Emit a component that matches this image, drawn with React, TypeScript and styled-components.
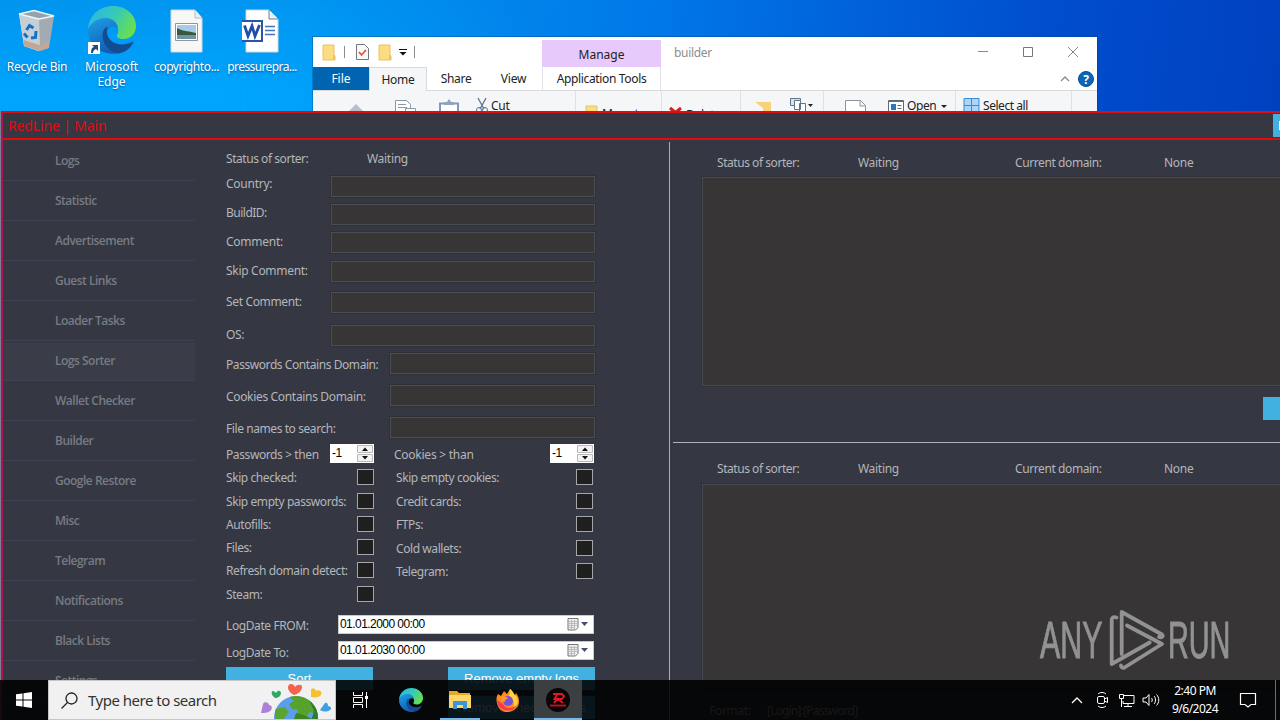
import React from 'react';
import styled, { createGlobalStyle } from 'styled-components';

const GlobalStyle = createGlobalStyle`
  * { box-sizing: border-box; }
  body {
    margin: 0;
    overflow: hidden;
    font-family: 'Noto Sans', sans-serif;
    font-size: 12px;
  }
  svg { display: block; flex: none; }
`;

const Desktop = styled.div`
  position: relative;
  width: 1280px;
  height: 720px;
  overflow: hidden;
  background: linear-gradient(97deg, #0095ee 0%, #0097f2 22%, #0078e8 48%, #0050cf 75%, #003cbc 100%);
`;

const Glow = styled.div`
  position: absolute;
  inset: 0 auto auto 0;
  width: 560px;
  height: 112px;
  background: linear-gradient(180deg, rgba(0, 168, 255, 0) 0%, rgba(0, 168, 255, .8) 80%);
  mask-image: linear-gradient(90deg, #000 40%, transparent);
`;

const Shortcuts = styled.div`
  position: relative;
  display: flex;
  padding: 6px 0 0;
`;

const Shortcut = styled.div<{ $w: number }>`
  width: ${p => p.$w}px;
  display: flex;
  flex-direction: column;
  align-items: center;
  row-gap: 5px;
  text-align: center;
  line-height: 15px;
  color: #fff;
  text-shadow: 0 1px 2px rgba(0, 30, 80, .6);
`;

const ShortcutArrow = styled.svg`
  position: absolute;
  left: 88px;
  top: 42px;
`;

const Text = styled.span<{ $ls?: number }>`
  display: inline-block;
  white-space: nowrap;
  letter-spacing: ${p => p.$ls ?? 0}px;
`;

/* ---------- explorer ---------- */

const Explorer = styled.div`
  position: absolute;
  left: 313px;
  top: 37px;
  width: 784px;
  height: 90px;
  background: #fff;
  color: #222;
  box-shadow: 0 0 0 1px rgba(0, 60, 130, .35);
`;

const ExplorerTop = styled.div`
  display: flex;
  height: 30px;
  align-items: center;
`;

const QuickBar = styled.div`
  width: 229px;
  display: flex;
  align-items: center;
  padding-left: 9px;
`;

const Tick = styled.i<{ $l: number; $r: number }>`
  width: 1px;
  height: 12px;
  margin: 0 ${p => p.$r}px 0 ${p => p.$l}px;
  background: #8c8c8c;
`;

const Gap = styled.i<{ $w: number }>`
  width: ${p => p.$w}px;
`;

const Manage = styled.div`
  width: 119px;
  height: 27px;
  align-self: flex-end;
  padding-top: 6px;
  background: #e8c9fb;
  text-align: center;
`;

const WindowTitle = styled.div`
  width: 304px;
  padding-left: 13px;
  color: #8d8d8d;
`;

const WindowButtons = styled.div`
  display: flex;
  column-gap: 33px;
  padding-left: 12px;
`;

const Tabs = styled.div`
  display: flex;
  height: 24px;
  line-height: 24px;
  border-bottom: 1px solid #d9dadb;
`;

const Tab = styled.div<{ $w: number; $kind?: 'file' | 'active' | 'tools' }>`
  width: ${p => p.$w}px;
  text-align: center;
  ${p => p.$kind === 'file' && 'background: #0064b0; color: #fff;'}
  ${p => p.$kind === 'active' && 'background: #f5f6f7; border: 1px solid #dadbdc; border-bottom: 0; height: 24px; line-height: 23px;'}
  ${p => p.$kind === 'tools' && 'border: solid #e4e0ea; border-width: 0 1px;'}
`;

const TabsRight = styled.div`
  display: flex;
  align-items: center;
  margin-left: auto;
  column-gap: 8px;
  padding-right: 3px;
`;

const Ribbon = styled.div`
  display: flex;
  height: 36px;
  background: #f5f6f7;
`;

const RibbonGroup = styled.div<{ $w: number }>`
  width: ${p => p.$w}px;
  flex: none;
  display: flex;
  align-items: flex-start;
  border-right: 1px solid #e0e1e2;
`;

const RibbonItem = styled.div<{ $l: number; $t?: number }>`
  display: flex;
  column-gap: 3px;
  margin-left: ${p => p.$l}px;
  padding-top: ${p => p.$t ?? 6}px;
  line-height: 18px;
`;

/* ---------- main window ---------- */

const Main = styled.div`
  position: absolute;
  left: 1px;
  top: 111px;
  width: 1400px;
  height: 640px;
  border: 2px solid #dc0f14;
  border-left-color: #a81848;
  background: #353842;
  color: #b4b6ba;
  box-shadow: -1px 0 0 #7b7f9c;
`;

const TitleBar = styled.div`
  display: flex;
  justify-content: space-between;
  height: 27px;
  border-bottom: 2px solid #e40c0a;
  color: #dc0d16;
  font-size: 14px;
  line-height: 26px;
  padding-left: 5px;
`;

const TitleButton = styled.div`
  width: 126px;
  height: 23px;
  margin-top: 1px;
  padding: 7px 0 0 6px;
  background: #41b1e1;
`;

const Body = styled.div`
  display: flex;
  height: 610px;
`;

const Nav = styled.div`
  width: 193px;
  padding: 1px 1px 0 1px;
`;

const NavItem = styled.div<{ $active?: boolean }>`
  height: 40px;
  padding-left: 51px;
  line-height: 39px;
  font-family: 'Open Sans', sans-serif;
  font-weight: 600;
  letter-spacing: -.5px;
  color: #777b84;
  border-bottom: 1px solid #3d4350;
  background: ${p => (p.$active ? 'linear-gradient(#353842 2px, #3a3d47 2px)' : 'none')};
`;

const Form = styled.div`
  width: 399px;
  padding: 6px 0 0 30px;
`;

const Row = styled.div<{ $gap?: number; $h?: number }>`
  display: flex;
  align-items: center;
  width: 369px;
  height: ${p => p.$h ?? 22}px;
  margin-top: ${p => p.$gap ?? 0}px;
`;

const Label = styled.div<{ $w: number; $up?: number; $in?: number; $ls?: number }>`
  width: ${p => p.$w}px;
  flex: none;
  line-height: 17px;
  padding: 1px 0 0 ${p => p.$in ?? 0}px;
  margin-bottom: ${p => (p.$up ?? 0) * 2}px;
  letter-spacing: ${p => p.$ls ?? -0.4}px;
  white-space: nowrap;
`;

const Field = styled.div`
  flex: 1;
  align-self: flex-start;
  height: 21px;
  background: #373536;
  border: 1px solid #4b4d51;
  outline: 1px solid #2e3138;
`;

const Spinner = styled.div`
  display: flex;
  width: 44px;
  height: 19px;
  padding: 1px 1px 1px 2px;
  background: #fff;
  color: #000;
  font: 12px/17px 'Liberation Sans', sans-serif;
  letter-spacing: -.5px;
  justify-content: space-between;
`;

const Checks = styled.div`
  display: flex;
  height: 146px;
`;

const CheckColumn = styled.div<{ $w: number; $l?: number }>`
  width: ${p => p.$w}px;
  margin-left: ${p => p.$l ?? 0}px;
  padding-top: 6px;
`;

const CheckRow = styled.div<{ $h: number }>`
  display: flex;
  justify-content: space-between;
  height: ${p => p.$h}px;
  line-height: 17px;
  letter-spacing: -.42px;
  white-space: nowrap;
`;

const CheckBox = styled.i`
  width: 17px;
  height: 16px;
  background: #1f1f20;
  border: 1px solid #a4a6a8;
`;

const DateBox = styled.div`
  display: flex;
  align-items: center;
  justify-content: space-between;
  width: 256px;
  height: 19px;
  padding: 0 4px 0 1px;
  background: #fff;
  border: 1px solid #c8cacc;
  color: #000;
  font: 12px/17px 'Liberation Sans', sans-serif;
`;

const Buttons = styled.div<{ $top: number }>`
  display: flex;
  justify-content: space-between;
  width: 369px;
  margin-top: ${p => p.$top}px;
`;

const Button = styled.div`
  width: 147px;
  height: 23px;
  background: #41b1e1;
  color: #fff;
  font: 13px/23px 'Liberation Sans', sans-serif;
  text-align: center;
`;

const Sorters = styled.div`
  flex: 1;
  margin: 2px 0 0 74px;
  border-left: 1px solid #a9acb2;
`;

const Sorter = styled.div<{ $h: number; $top: number }>`
  height: ${p => p.$h}px;
  margin-left: 3px;
  padding: ${p => p.$top}px 0 0 29px;
  border-bottom: 1px solid #b1b3b8;
`;

const StatusLine = styled.div`
  display: flex;
  height: 16px;
  padding-left: 15px;
  line-height: 17px;
`;

const Cell = styled.div<{ $w: number; $ls?: number }>`
  width: ${p => p.$w}px;
  letter-spacing: ${p => p.$ls ?? -0.3}px;
  white-space: nowrap;
`;

const Output = styled.div<{ $top: number }>`
  height: 209px;
  margin-top: ${p => p.$top}px;
  background: #373536;
  border: 1px solid #484a4d;
  outline: 1px solid #2f3138;
`;

const SideButton = styled.div`
  width: 100px;
  height: 23px;
  margin: 11px 0 0 561px;
  background: #41b1e1;
`;

const Format = styled.div`
  display: flex;
  padding: 9px 0 0 7px;
`;

/* ---------- watermark and taskbar ---------- */

const Watermark = styled.div`
  position: absolute;
  left: 1040px;
  top: 608px;
  display: flex;
  align-items: center;
  height: 66px;
  color: #929293;
`;

const Word = styled.div<{ $w: number; $scale: number }>`
  width: ${p => p.$w}px;
  font: 51px/66px 'Liberation Sans', sans-serif;
  -webkit-text-stroke: 1px #929293;
  white-space: nowrap;
  transform: scaleX(${p => p.$scale});
  transform-origin: 0 50%;
`;

const Taskbar = styled.div`
  position: absolute;
  left: 0;
  top: 680px;
  display: flex;
  align-items: center;
  width: 1280px;
  height: 40px;
  background: rgba(0, 0, 0, .88);
  color: #fff;
`;

const Start = styled.div`
  width: 48px;
  padding-left: 16px;
`;

const Search = styled.div`
  display: flex;
  align-items: center;
  width: 288px;
  height: 40px;
  padding-left: 12px;
  background: #f1f1f1;
  border: 1px solid #c6c6c6;
  color: #333;
  font-size: 15px;
`;

const SearchText = styled.div`
  width: 182px;
  padding-left: 10px;
  white-space: nowrap;
`;

const Task = styled.div<{ $w: number; $open?: boolean; $active?: boolean }>`
  display: flex;
  align-items: center;
  justify-content: center;
  width: ${p => p.$w}px;
  height: 40px;
  background: ${p => (p.$active ? '#3b3f42' : 'none')};
  border-bottom: ${p => (p.$open ? '2px solid #76b9ed' : '0')};
  padding-top: ${p => (p.$open ? 2 : 0)}px;
`;

const Tray = styled.div`
  display: flex;
  align-items: center;
  height: 40px;
  margin-left: auto;
  border-right: 1px solid #6e6e6e;
  margin-right: 4px;
  padding-right: 18px;
`;

const Clock = styled.div`
  width: 70px;
  margin-right: 9px;
  text-align: center;
  line-height: 18px;
  letter-spacing: -.5px;
`;

const EdgeLogo: React.FC<{ size: number; id: string }> = ({ size, id }) => (
  <svg width={size} height={size} viewBox='0 0 48 48'>
    <defs>
      <linearGradient id={`${id}a`} x1='0' y1='.2' x2='1' y2='.6'>
        <stop offset='0' stopColor='#2bb7e6' />
        <stop offset='.5' stopColor='#36c9b8' />
        <stop offset='1' stopColor='#6be04c' />
      </linearGradient>
      <linearGradient id={`${id}b`} x1='0' y1='0' x2='.4' y2='1'>
        <stop offset='0' stopColor='#1e9fe6' />
        <stop offset='1' stopColor='#0f5fb5' />
      </linearGradient>
    </defs>
    <path d='M0 23C1 9 12 0 25 0c13 0 23 9 23 20 0 8-6 13-12 13-6 0-8-2-7-4 3-4 1-12-8-13C11 14 3 18 0 23z' fill={`url(#${id}a)`} />
    <path d='M0 24c2-7 9-12 18-12 7 0 12 5 12 11-4-5-11-2-11 5 0 9 6 17 14 19C15 51 0 40 0 24z' fill={`url(#${id}b)`} />
    <path d='M17 22c-6 8 0 22 11 25 8 1 14-4 17-10 1-1 0-2-1-1-12 6-25 0-25-10 0-2 0-3 1-5z' fill='#134c93' />
  </svg>
);

const RecycleBin = () => (
  <svg width='42' height='48' viewBox='0 0 42 48'>
    <path d='M3 8l5 32 14 5 9-3 5-31-16-6z' fill='#cfd7dc' />
    <path d='M3 8l20 5 1 32-16-5z' fill='#c6cfd5' />
    <path d='M23 13l15-3-5 32-9 3z' fill='#a2abb1' />
    <path d='M7.500 34l16 5 10-4-1 7-9 3-15-5z' fill='#c2a797' />
    <path d='M3 8l15-3.500L38 10l-15 3z' fill='#93a3ab' stroke='#edf5f8' strokeWidth='1.300' />
    <g fill='none' stroke='#1670c4' strokeWidth='3'>
      <path d='M10.500 24l3-4.500 4 2.500M20 25l-.5 6.500-4.500.5M11.500 31.500L8 27.500' />
    </g>
  </svg>
);

const PictureFile = () => (
  <svg width='34' height='44' viewBox='0 0 34 44'>
    <path d='M1 1h24l7 8v34H1z' fill='#f7f7f5' stroke='#d3d6d8' />
    <path d='M25 1v8h7' fill='#e9eef0' stroke='#b4bfc6' />
    <path d='M5.500 14.500h22v17h-22z' fill='#fff' stroke='#8b98a0' />
    <path d='M7 16h19v8H7z' fill='#a6cbe7' />
    <path d='M7 19c7 4 13 3 19 5v2H7z' fill='#39583c' />
    <path d='M7 26h19v4H7z' fill='#6f93a6' />
  </svg>
);

const WordFile = () => (
  <svg width='40' height='44' viewBox='0 0 40 44'>
    <path d='M6 1h23l9 9v33H6z' fill='#fff' stroke='#cfd5dc' />
    <path d='M29 1v9h9' fill='#eef1f4' stroke='#6e7c8c' />
    <path d='M25 17.500h10M25 21.500h10M25 25.500h10' stroke='#4373b9' strokeWidth='1.300' />
    <path d='M1 12h21v20H1z' fill='#fff' stroke='#2b56a8' strokeWidth='2' />
    <path d='M4.500 16.500L8 27l4-10 3 10 4.500-11' fill='none' stroke='#1f4ea8' strokeWidth='2.800' />
  </svg>
);

const Folder = () => (
  <svg width='14' height='17' viewBox='0 0 14 17'>
    <path d='M1 1h11v10l1 1v4H1z' fill='#fbdc83' stroke='#ecc25f' />
    <path d='M12 11v5' stroke='#e3b247' />
  </svg>
);

const CheckedPage = () => (
  <svg width='13' height='16' viewBox='0 0 13 16'>
    <path d='M.5.5h8l4 4v11H.5z' fill='#f9f9fa' stroke='#73787e' />
    <path d='M3 8l2.500 3L10 6' fill='none' stroke='#d95b3e' strokeWidth='1.800' />
  </svg>
);

const Globe = () => (
  <svg width='72' height='38' viewBox='0 0 72 38'>
    <defs><clipPath id='globe'><circle cx='36' cy='37' r='22' /></clipPath></defs>
    <circle cx='36' cy='37' r='22' fill='#5b9fec' />
    <g clipPath='url(#globe)'>
      <path d='M28 15h20l10 10v9l-8-3-5 7-9-3 2-6-6-1-3-5 5-3z' fill='#57a22b' />
      <path d='M15 28l10-2 4 5-6 8h-8z' fill='#5aa431' />
      <path d='M36 32l8 2 8 4H34z' fill='#3f8423' />
      <path d='M48 16l10 10v14h-7l3-10z' fill='#2f7d31' />
    </g>
    <path d='M34 14c-8-4-7-11-3-11 2 0 3 1 4 3 2-3 7-3 7 0 0 4-4 7-8 8z' fill='#f2644c' />
    <path d='M15 17c-4-3-4-7-2-7 1 0 2 1 3 2 2-4 5-2 5 0 0 3-3 5-6 5z' fill='#32a866' />
    <path d='M51 16V9c0-2 4-3 5 1 3-2 7 1 5 4-1 2-6 3-10 2z' fill='#f8c02e' />
    <path d='M1 32l2-9c1-3 6-2 6 1 3 0 4 4 1 6-2 2-6 2-9 2z' fill='#ac80d6' />
    <path d='M60 29l5-7c2-1 3 1 3 3 3 0 4 3 2 4-3 2-6 2-10 0z' fill='#3b9fe0' />
  </svg>
);

const PlayMark = () => (
  <svg width='60' height='66' viewBox='0 0 60 66' fill='none' stroke='#929293' strokeWidth='3.800' strokeLinecap='round' strokeLinejoin='round'>
    <path d='M8.500 9.500c-3-1-4.800 0-4.800 2.500V56l38-21.500' />
    <path d='M13.700 46V4l40.300 22.500c1.500 1.500 0 3.500-3 2.500' />
    <path d='M19 17.500L54 36 16.500 59.500c-2 1-3.500-.5-3.500-2' />
  </svg>
);

const navItems = [
  'Logs', 'Statistic', 'Advertisement', 'Guest Links', 'Loader Tasks', 'Logs Sorter', 'Wallet Checker',
  'Builder', 'Google Restore', 'Misc', 'Telegram', 'Notifications', 'Black Lists', 'Settings',
];

// gap: space over the row, w: label column, up: how far the label sits over the middle
const fields = [
  { text: 'Country:', gap: 6, w: 104.5, up: 4, ls: -0.25 },
  { text: 'BuildID:', gap: 6, w: 104.5, up: 3, ls: -0.5 },
  { text: 'Comment:', gap: 6, w: 104.5, up: 2, ls: -0.25 },
  { text: 'Skip Comment:', gap: 7, w: 104.5, up: 2, ls: -0.3 },
  { text: 'Set Comment:', gap: 9, w: 104.5, up: 2, ls: -0.35 },
  { text: 'OS:', gap: 11, w: 104.5, up: 2, ls: -0.3 },
  { text: 'Passwords Contains Domain:', gap: 6, w: 163.5, up: 0, ls: -0.43 },
  { text: 'Cookies Contains Domain:', gap: 10, w: 163.5, up: 0, ls: -0.33 },
  { text: 'File names to search:', gap: 10, w: 163.5, up: 0, ls: -0.42 },
];

const leftChecks = [
  { text: 'Skip checked:', h: 24 },
  { text: 'Skip empty passwords:', h: 23 },
  { text: 'Autofills:', h: 23 },
  { text: 'Files:', h: 23 },
  { text: 'Refresh domain detect:', h: 24 },
  { text: 'Steam:', h: 16 },
];

const rightChecks = [
  { text: 'Skip empty cookies:', h: 24 },
  { text: 'Credit cards:', h: 23 },
  { text: 'FTPs:', h: 24 },
  { text: 'Cold wallets:', h: 23 },
  { text: 'Telegram:', h: 16 },
];

const NumberBox = () => (
  <Spinner>
    -1
    <svg width='16' height='17' viewBox='0 0 16 17'>
      <path d='M.5.5h15v7H.5zM.5 9.500h15v7H.5z' fill='#f2f2f2' stroke='#b9b9b9' />
      <path d='M5 6l3-3.500L11 6zM5 11l3 3.500 3-3.500z' fill='#111' />
    </svg>
  </Spinner>
);

const DatePicker: React.FC<{ value: string }> = ({ value }) => (
  <DateBox>
    <Text $ls={-0.55}>{value}</Text>
    <svg width='22' height='13' viewBox='0 0 22 13'>
      <path d='M1 .5h10v9l-2.500 2.500H1z' fill='#eee' stroke='#777' />
      <path d='M2 3.500h8M2 5.500h8M2 7.500h8M2 9.500h6M4.500 2v9M7.500 2v9' stroke='#aaa' strokeWidth='.7' />
      <path d='M14 4h7l-3.500 4z' fill='#40506c' />
    </svg>
  </DateBox>
);

const StatusRow = () => (
  <StatusLine>
    <Cell $w={141} $ls={-0.45}>Status of sorter:</Cell>
    <Cell $w={157}>Waiting</Cell>
    <Cell $w={149} $ls={-0.4}>Current domain:</Cell>
    <Cell $w={60}>None</Cell>
  </StatusLine>
);

const ExplorerWindow = () => (
  <Explorer>
    <ExplorerTop>
      <QuickBar>
        <Folder />
        <Tick $l={8} $r={11} />
        <CheckedPage />
        <Gap $w={9} />
        <Folder />
        <Gap $w={7} />
        <svg width='8' height='8' viewBox='0 0 8 8'><path d='M0 1.500h8' stroke='#111' /><path d='M.5 4h7L4 7.500z' fill='#111' /></svg>
        <Tick $l={7} $r={0} />
      </QuickBar>
      <Manage>Manage</Manage>
      <WindowTitle><Text $ls={-0.3}>builder</Text></WindowTitle>
      <WindowButtons>
        <svg width='12' height='12'><path d='M1 5.500h10' stroke='#888' /></svg>
        <svg width='12' height='12'><path d='M1.500 1.500h9v9h-9z' fill='none' stroke='#777' /></svg>
        <svg width='12' height='12'><path d='M1 1l10 10M11 1L1 11' stroke='#888' /></svg>
      </WindowButtons>
    </ExplorerTop>
    <Tabs>
      <Tab $w={56} $kind='file'>File</Tab>
      <Tab $w={58} $kind='active'><Text $ls={-0.3}>Home</Text></Tab>
      <Tab $w={58}><Text $ls={-0.3}>Share</Text></Tab>
      <Tab $w={57}><Text $ls={-0.2}>View</Text></Tab>
      <Tab $w={119} $kind='tools'><Text $ls={-0.35}>Application Tools</Text></Tab>
      <TabsRight>
        <svg width='10' height='6'><path d='M1 5l4-4 4 4' fill='none' stroke='#8a8a8a' strokeWidth='1.300' /></svg>
        <svg width='16' height='16'>
          <circle cx='8' cy='8' r='7.500' fill='#0a66b8' stroke='#084e92' />
          <text x='8' y='12.500' fontSize='12' fontWeight='700' fill='#fff' textAnchor='middle'>?</text>
        </svg>
      </TabsRight>
    </Tabs>
    <Ribbon>
      <RibbonGroup $w={263}>
        <RibbonItem $l={36} $t={12}>
          <svg width='14' height='14'><path d='M7 1l7 7H0z' fill='#b9bfca' /></svg>
        </RibbonItem>
        <RibbonItem $l={32} $t={8}>
          <svg width='24' height='20' fill='#fff' stroke='#8b98a8'><path d='M.5 1.500h11l4 4v14H.5zM3 5.500h8M3 8.500h9' /><path d='M10.500 9.500h10v10h-10z' /></svg>
        </RibbonItem>
        <RibbonItem $l={20} $t={8}>
          <svg width='20' height='20'><path d='M1 4.500h18v15H1z' fill='#fff' stroke='#8399b6' strokeWidth='2' /><path d='M5 6V3h3l2-3 2 3h3v3z' fill='#91a4bd' /></svg>
        </RibbonItem>
        <RibbonItem $l={17}>
          <svg width='12' height='18' viewBox='0 0 12 18' fill='none' stroke='#587693'><path d='M2 1l6 11M10 1L4 12' strokeWidth='1.300' /><circle cx='3' cy='13' r='2.500' /><circle cx='9' cy='13' r='2.500' /></svg>
          <Text $ls={-0.3}>Cut</Text>
        </RibbonItem>
      </RibbonGroup>
      <RibbonGroup $w={86}>
        <RibbonItem $l={9} $t={14}><Folder /><Text $ls={-0.3}>Move to</Text></RibbonItem>
      </RibbonGroup>
      <RibbonGroup $w={79}>
        <RibbonItem $l={7} $t={15}>
          <svg width='14' height='12'><path d='M1 2l11 9M12 2L1 11' stroke='#d42020' strokeWidth='3' /></svg>
          <Text $ls={-0.3}>Delete</Text>
        </RibbonItem>
      </RibbonGroup>
      <RibbonGroup $w={83}>
        <RibbonItem $l={14} $t={11}><svg width='16' height='20'><path d='M0 0h16v20H8V6z' fill='#fad27a' /></svg></RibbonItem>
        <RibbonItem $l={19} $t={6}>
          <svg width='24' height='18' fill='#fff' stroke='#60758a'><path d='M.5 1.500h10v7H.5z' fill='#cfe4f7' /><path d='M4.500 3.500h6v9h-6zM9.500 6.500h6v9h-6z' /><path d='M18 7h5l-2.500 3z' fill='#222' stroke='none' /></svg>
        </RibbonItem>
      </RibbonGroup>
      <RibbonGroup $w={132}>
        <RibbonItem $l={21} $t={8}><svg width='22' height='24'><path d='M.5 1.500h15l5 5v16H.5zM15 2v5h5' fill='#fff' stroke='#8e949a' /></svg></RibbonItem>
        <RibbonItem $l={21}>
          <svg width='16' height='18' fill='#fff' stroke='#5d6b78'><path d='M.5 3.500h15v13H.5z' /><path d='M1 4h14' strokeWidth='2' /><path d='M3 7h5v6H3z' fill='#2778bd' stroke='none' /><path d='M9.500 8.500h4M9.500 11.500h4' /></svg>
          <Text $ls={-0.4}>Open</Text>
          <svg width='10' height='18'><path d='M2 8h6l-3 3z' fill='#222' /></svg>
        </RibbonItem>
      </RibbonGroup>
      <RibbonGroup $w={116}>
        <RibbonItem $l={7}>
          <svg width='17' height='18'><path d='M1 1.500h15v14H1zM8.500 2v14M1 8.500h15' fill='#a9d6fa' stroke='#3c8bd0' /></svg>
          <Text $ls={-0.45}>Select all</Text>
        </RibbonItem>
      </RibbonGroup>
    </Ribbon>
  </Explorer>
);

const App: React.FC = () => (
  <Desktop>
    <GlobalStyle />
    <Glow />
    <Shortcuts>
      <Shortcut $w={74}><RecycleBin /><Text $ls={-0.25}>Recycle Bin</Text></Shortcut>
      <Shortcut $w={75}><EdgeLogo size={48} id='desk' />Microsoft Edge</Shortcut>
      <Shortcut $w={75}><svg width='34' height='48'><g transform='translate(0 3)'><PictureFile /></g></svg><Text $ls={-0.4}>copyrighto...</Text></Shortcut>
      <Shortcut $w={76}><svg width='40' height='48'><g transform='translate(-2 3)'><WordFile /></g></svg><Text $ls={-0.6}>pressurepra...</Text></Shortcut>
      <ShortcutArrow width='12' height='12'>
        <path d='M0 0h12v12H0z' fill='#fff' />
        <path d='M3 11c0-4 1-6 3-6L4 3h6v6L8 7C6 8 5 9 5 11z' fill='#234c7e' />
      </ShortcutArrow>
    </Shortcuts>
    <ExplorerWindow />
    <Main>
      <TitleBar><Text $ls={-0.15}>RedLine | Main</Text><TitleButton><svg width='10' height='9'><path d='M0 0v9' stroke='#fff' strokeWidth='2' /></svg></TitleButton></TitleBar>
      <Body>
        <Nav>
          {navItems.map(item => <NavItem key={item} $active={item === 'Logs Sorter'}>{item}</NavItem>)}
        </Nav>
        <Form>
          <Row $h={24}><Label $w={141} $ls={-0.45}>Status of sorter:</Label><Text $ls={-0.3}>Waiting</Text></Row>
          {fields.map(f => (
            <Row key={f.text} $gap={f.gap}><Label $w={f.w} $up={f.up} $ls={f.ls}>{f.text}</Label><Field /></Row>
          ))}
          <Row $gap={5} $h={19}>
            <Label $w={104}>Passwords &gt; then</Label><NumberBox />
            <Label $w={176} $in={20} $ls={-0.25}>Cookies &gt; than</Label><NumberBox />
          </Row>
          <Checks>
            <CheckColumn $w={148}>
              {leftChecks.map(c => <CheckRow key={c.text} $h={c.h}>{c.text}<CheckBox /></CheckRow>)}
            </CheckColumn>
            <CheckColumn $w={197} $l={22}>
              {rightChecks.map(c => <CheckRow key={c.text} $h={c.h}>{c.text}<CheckBox /></CheckRow>)}
            </CheckColumn>
          </Checks>
          <Row $gap={6} $h={19}><Label $w={112}>LogDate FROM:</Label><DatePicker value='01.01.2000 00:00' /></Row>
          <Row $gap={7} $h={19}><Label $w={112} $up={-1}>LogDate To:</Label><DatePicker value='01.01.2030 00:00' /></Row>
          <Buttons $top={7}><Button>Sort</Button><Button>Remove empty logs</Button></Buttons>
          <Buttons $top={6}><span /><Button>Remove checked logs</Button></Buttons>
        </Form>
        <Sorters>
          <Sorter $h={301} $top={12}>
            <StatusRow />
            <Output $top={7} />
            <SideButton />
          </Sorter>
          <Sorter $h={300} $top={17}>
            <StatusRow />
            <Output $top={8} />
            <Format><Cell $w={58}>Format:</Cell><Cell $w={100} $ls={-0.8}>[Login]:[Password]</Cell></Format>
          </Sorter>
        </Sorters>
      </Body>
    </Main>
    <Watermark>
      <Word $w={68} $scale={0.595}>ANY</Word>
      <PlayMark />
      <Word $w={60} $scale={0.565}>RUN</Word>
    </Watermark>
    <Taskbar>
      <Start>
        <svg width='16' height='16'><path d='M0 2.300L6.500 1.400V7.500H0zM7.500 1.200L16 0v7.500H7.500zM0 8.500h6.500v6.100L0 13.700zM7.500 8.500H16V16l-8.500-1.200z' fill='#fff' /></svg>
      </Start>
      <Search>
        <svg width='17' height='17'><circle cx='10.500' cy='6.500' r='5.500' fill='none' stroke='#222' strokeWidth='1.300' /><path d='M6.500 10.500L.5 16.500' stroke='#222' strokeWidth='1.300' /></svg>
        <SearchText><Text $ls={-0.5}>Type here to search</Text></SearchText>
        <Globe />
      </Search>
      <Task $w={48}>
        <svg width='17' height='16' fill='none' stroke='#fff'><path d='M1.500 0v3.500h9V0M1.500 16v-3.500h9V16M1.500 5.500h9v5h-9zM14.500 0v16' /><path d='M13 4h3v3h-3z' fill='#fff' stroke='none' /></svg>
      </Task>
      <Task $w={54}><EdgeLogo size={24} id='task' /></Task>
      <Gap $w={2} />
      <Task $w={40} $open>
        <svg width='22' height='20' viewBox='0 0 22 20'><path d='M0 1h8l2 2h11v5H0z' fill='#e8a82b' /><path d='M0 5h22v13H0z' fill='#fcd668' /><path d='M4 19v-8h14v8h-4v-4H8v4z' fill='#3897d9' /></svg>
      </Task>
      <Gap $w={2} />
      <Task $w={52}>
        <svg width='24' height='24' viewBox='0 0 24 24'>
          <path d='M2 6l3 2 3-5 3 3 3-5c3 2 3 5 5 6l1-2c3 4 4 9 2 13-5 8-17 8-20 0C0 14 0 9 2 6z' fill='#ff8a20' />
          <path d='M14 1c4 3 4 6 6 7 3 3 2 11-3 13 2-6 1-10-4-12z' fill='#ffd43a' />
          <path d='M1 12c0 12 16 14 20 5-5 4-11 4-14-1z' fill='#f33c50' />
          <circle cx='12' cy='13' r='5' fill='#7951d8' /><path d='M5 9c3-2 5 0 7 1-2 2-4 2-3 4-3 0-4-2-4-5z' fill='#ff9a22' />
        </svg>
      </Task>
      <Task $w={48} $open $active>
        <svg width='24' height='24' viewBox='0 0 24 24'>
          <circle cx='12' cy='12' r='12' fill='#0a0506' />
          <path d='M7 6h9l2 2-2 3h-4l5 4M11 6.500L8.500 11h3L8 15' fill='none' stroke='#e01822' strokeWidth='1.900' />
          <path d='M4 17.500h16' stroke='#c4121c' strokeWidth='1.800' />
        </svg>
      </Task>
      <Tray>
        <svg width='12' height='8'><path d='M1 7l5-5 5 5' fill='none' stroke='#fff' strokeWidth='1.300' /></svg>
        <Gap $w={13} />
        <svg width='13' height='18' fill='none' stroke='#fff'><path d='M2 3c2-2 6-2 8 0M2 15c2 2 6 2 8 0' /><rect x='1.500' y='5.500' width='7' height='7' rx='1.500' /><path d='M8.500 8l3-1.500v5l-3-1.500' /></svg>
        <Gap $w={9} />
        <svg width='17' height='15' fill='none' stroke='#fff'><path d='M6 2.500h10v8H5V8M10 11v3M6 13.500h8' /><path d='M1.500 1.500h4v4h-4zM3.500 6v8' /></svg>
        <Gap $w={7} />
        <svg width='18' height='14' fill='none' stroke='#fff'><path d='M1 5h3l3-3.500v11L4 9H1z' /><path d='M9.500 5c1 1 1 3 0 4M12 3c2 2 2 6 0 8M14.500 1.500c3 3 3 8 0 11' /></svg>
        <Clock>2:40 PM<br />9/6/2024</Clock>
        <svg width='18' height='17'><path d='M1.500 1.500h15v11h-4.500l-3 2.500-3-2.500H1.500z' fill='none' stroke='#fff' strokeWidth='1.200' /></svg>
      </Tray>
    </Taskbar>
  </Desktop>
);

export default App;
